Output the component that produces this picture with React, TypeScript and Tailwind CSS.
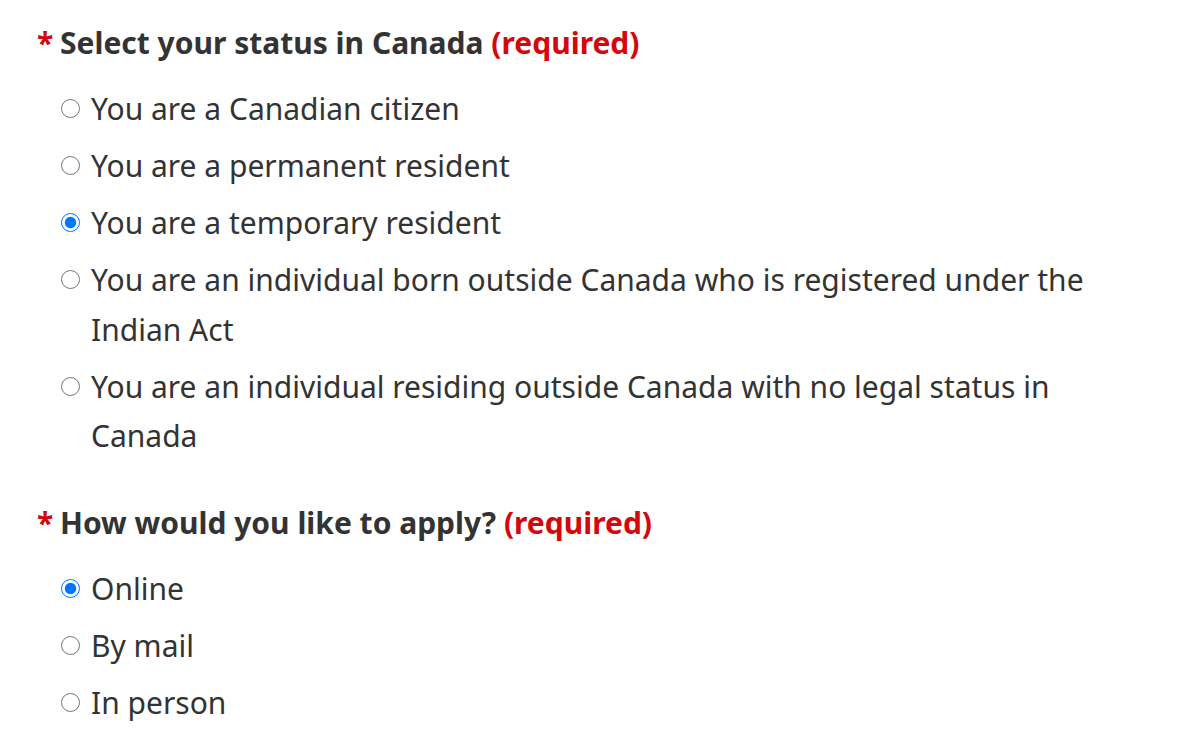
import { useState } from 'react';

const statuses = [
  'You are a Canadian citizen',
  'You are a permanent resident',
  'You are a temporary resident',
  'You are an individual born outside Canada who is registered under the Indian Act',
  'You are an individual residing outside Canada with no legal status in Canada',
];

const methods = ['Online', 'By mail', 'In person'];

function Question({
  name,
  title,
  options,
  value,
  onChange,
}: {
  name: string;
  title: string;
  options: string[];
  value: string;
  onChange: (v: string) => void;
}) {
  return (
    <fieldset className="mb-[40px]">
      <legend className="flex items-baseline font-bold text-[30px] leading-[44px] text-[#333]">
        <span className="text-[#d3080c] w-[23px]">*</span>
        <span>
          {title} <span className="text-[#d3080c]">(required)</span>
        </span>
      </legend>
      <div className="mt-[19px] ml-[24px] flex flex-col gap-[7.5px]">
        {options.map((opt) => (
          <label key={opt} className="flex items-start text-[30px] leading-[49.5px] text-[#333]">
            <span className="h-[49.5px] flex items-center shrink-0">
              <input
                type="radio"
                name={name}
                checked={value === opt}
                onChange={() => onChange(opt)}
                className="w-[19px] h-[19px] m-0 mr-[11px]"
              />
            </span>
            <span>{opt}</span>
          </label>
        ))}
      </div>
    </fieldset>
  );
}

export default function App() {
  const [status, setStatus] = useState(statuses[2]);
  const [method, setMethod] = useState('Online');

  return (
    <div className="bg-white min-h-screen pl-[37px] pt-[21px] pr-[80px]" style={{ fontFamily: '"Noto Sans", sans-serif' }}>
      <Question
        name="status"
        title="Select your status in Canada"
        options={statuses}
        value={status}
        onChange={setStatus}
      />
      <Question
        name="method"
        title="How would you like to apply?"
        options={methods}
        value={method}
        onChange={setMethod}
      />
    </div>
  );
}
